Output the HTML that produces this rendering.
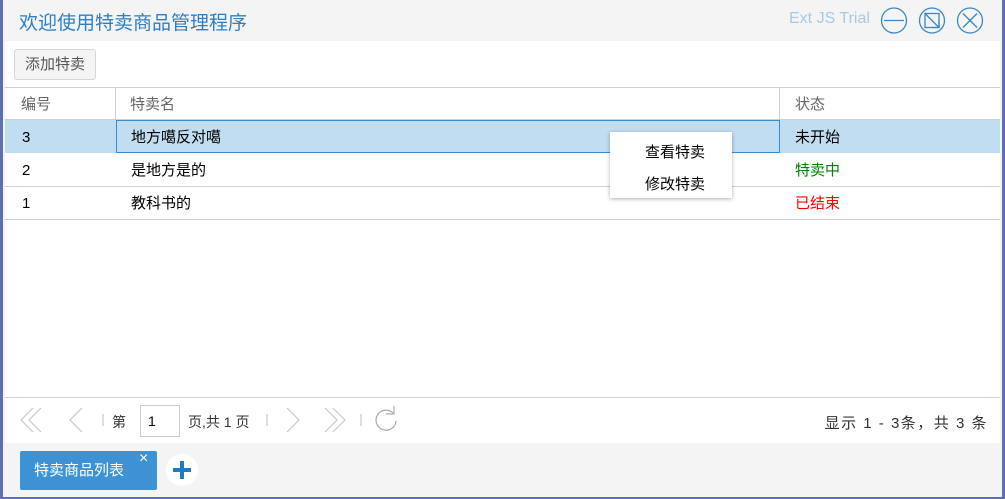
<!DOCTYPE html>
<html><head><meta charset="utf-8"><style>
*{margin:0;padding:0;box-sizing:border-box}
body{width:1005px;height:499px;background:#5f6fb4;font-family:"Liberation Sans","Noto Sans CJK SC",sans-serif;font-size:14px;color:#000;position:relative;overflow:hidden}
.win{position:absolute;left:3px;top:0;width:999px;height:497px;background:#f4f4f4}
.a{position:absolute}
.body{position:absolute;left:2px;top:41px;width:995px;height:402px;background:#fff}
.cell{position:absolute;font-size:15px;line-height:35px}
.hl{position:absolute;height:1px;background:#d0d0d0}
</style></head><body>
<div class="win">
<div class="a" style="left:16px;top:8px;font-size:19px;color:#2f7fc5">欢迎使用特卖商品管理程序</div>
<div class="a" style="left:786px;top:10px;font-size:16px;color:#a8c8e6">Ext JS Trial</div>
<svg class="a" style="left:877px;top:6px" width="120" height="30">
<g fill="none" stroke="#3d86c6" stroke-width="1.3">
<circle cx="14" cy="14.5" r="12.5"/><line x1="4" y1="14.5" x2="24" y2="14.5"/>
<circle cx="52" cy="14.5" r="12.5"/><rect x="45" y="7.5" width="14" height="14"/><line x1="45" y1="7.5" x2="59" y2="21.5"/><path d="M52 21.5 L59 21.5 L59 14.5"/>
<circle cx="90" cy="14.5" r="12.5"/><line x1="83" y1="7.5" x2="97" y2="21.5"/><line x1="97" y1="7.5" x2="83" y2="21.5"/>
</g></svg>
<div class="body">
<div class="a" style="left:9px;top:8px;width:82px;height:31px;border:1px solid #d6d6d6;border-radius:3px;background:#f4f4f4;color:#555;line-height:29px;text-align:center;font-size:15px">添加特卖</div>
<div class="hl" style="left:0;top:46px;width:995px"></div>
<div class="cell" style="left:16px;top:46px;color:#666">编号</div>
<div class="a" style="left:110px;top:46px;width:1px;height:33px;background:#d0d0d0"></div>
<div class="cell" style="left:125px;top:46px;color:#666">特卖名</div>
<div class="a" style="left:774px;top:46px;width:1px;height:33px;background:#d0d0d0"></div>
<div class="cell" style="left:790px;top:46px;color:#666">状态</div>
<div class="hl" style="left:0;top:78px;width:995px"></div>
<div class="a" style="left:0;top:79px;width:995px;height:33px;background:#c1ddf1"></div>
<div class="a" style="left:111px;top:79px;width:664px;height:33px;border:1px solid #3d8ad0"></div>
<div class="cell" style="left:17px;top:79px">3</div>
<div class="cell" style="left:126px;top:79px">地方噶反对噶</div>
<div class="cell" style="left:790px;top:79px">未开始</div>
<div class="cell" style="left:17px;top:112px">2</div>
<div class="cell" style="left:126px;top:112px">是地方是的</div>
<div class="cell" style="left:790px;top:112px;color:#008000">特卖中</div>
<div class="hl" style="left:0;top:145px;width:995px"></div>
<div class="cell" style="left:17px;top:145px">1</div>
<div class="cell" style="left:126px;top:145px">教科书的</div>
<div class="cell" style="left:790px;top:145px;color:#f00">已结束</div>
<div class="hl" style="left:0;top:178px;width:995px"></div>
<div class="a" style="left:605px;top:91px;width:122px;height:66px;background:#fff;box-shadow:0 1px 4px rgba(0,0,0,.3);font-size:15px">
<div class="a" style="left:35px;top:9px">查看特卖</div>
<div class="a" style="left:35px;top:41px">修改特卖</div></div>
<div class="hl" style="left:0;top:356px;width:995px"></div>
<svg class="a" style="left:10px;top:363px" width="390" height="32"><g fill="none" stroke="#c8c8c8" stroke-width="1.2">
<path d="M18 4 L6 16 L18 28 M26 4 L14 16 L26 28"/><path d="M67 4 L55 16 L67 28"/>
<line x1="88" y1="10" x2="88" y2="22"/><line x1="252" y1="10" x2="252" y2="22"/>
<path d="M272 4 L284 16 L272 28"/><path d="M310 4 L322 16 L310 28 M318 4 L330 16 L318 28"/>
<line x1="346" y1="10" x2="346" y2="22"/>
<path d="M378 9 A10 10 0 1 0 381 17" stroke="#aaa"/><path d="M379 2 L379 10 L371 10" stroke="#aaa"/>
</g></svg>
<div class="a" style="left:107px;top:371px;color:#333">第</div>
<div class="a" style="left:135px;top:364px;width:40px;height:32px;border:1px solid #ccc;line-height:30px;padding-left:7px">1</div>
<div class="a" style="left:183px;top:371px;color:#333">页,共 1 页</div>
<div class="a" style="right:12px;top:371px;color:#333;font-size:15px;white-space:nowrap;letter-spacing:1.5px">显示 1 - 3条，共 3 条</div>
</div>
<div class="a" style="left:17px;top:451px;width:137px;height:39px;background:#3d92d6;border-radius:2px;color:#fff;font-size:15px;line-height:39px;padding-left:14px">特卖商品列表</div>
<div class="a" style="left:136px;top:450px;color:#fff;font-size:16px">×</div>
<div class="a" style="left:163px;top:454px;width:32px;height:32px;border-radius:50%;background:#fff"></div>
<div class="a" style="left:177px;top:461px;width:4px;height:18px;background:#1f7ac4"></div>
<div class="a" style="left:170px;top:468px;width:18px;height:4px;background:#1f7ac4"></div>
</div>
</body></html>
